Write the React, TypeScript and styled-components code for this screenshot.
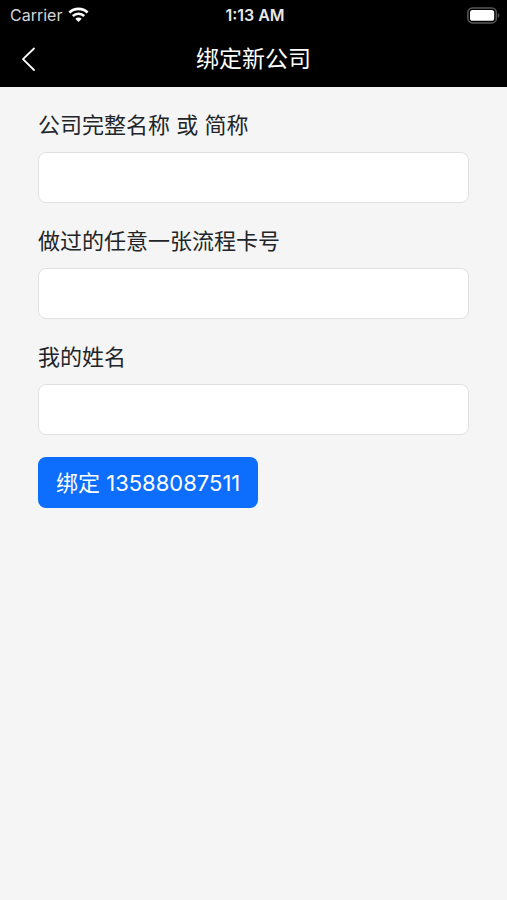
import React from "react";
import styled, { createGlobalStyle } from "styled-components";

const GlobalStyle = createGlobalStyle`
  *, *::before, *::after { box-sizing: border-box; }
  html { background: #f5f5f5; }
  body {
    margin: 0;
    color: #212529;
    font-family: Inter, "Noto Sans CJK SC", sans-serif;
    -webkit-font-smoothing: antialiased;
  }
`;

const Screen = styled.div`
  min-height: 100vh;
  background: #f5f5f5;
`;

const Header = styled.header`
  background: #000;
  color: #fff;
`;

const StatusBar = styled.div`
  display: grid;
  grid-template-columns: 1fr auto 1fr;
  align-items: center;
  height: 30px;
  padding: 0 7px 0 10px;
  font-size: 16px;
  line-height: 20px;
`;

const Carrier = styled.div`
  display: flex;
  align-items: center;
  gap: 6px;
  color: #d6d6d6;
`;

const Clock = styled.time`
  color: #e8e8e8;
  font-weight: 600;
`;

const Battery = styled.div`
  display: flex;
  justify-content: flex-end;
`;

const NavBar = styled.nav`
  display: grid;
  grid-template-columns: 56px 1fr 56px;
  align-items: center;
  height: 57px;
`;

const BackButton = styled.button`
  display: flex;
  align-items: center;
  justify-content: center;
  height: 56px;
  padding: 0;
  border: 0;
  background: none;
  color: #fff;
`;

const Title = styled.h1`
  margin: 0;
  text-align: center;
  font-size: 23px;
  font-weight: 400;
  line-height: 32px;
`;

const Form = styled.form`
  display: flex;
  flex-direction: column;
  align-items: flex-start;
  gap: 22px;
  padding: 22px 38px;
`;

const Field = styled.div`
  display: flex;
  flex-direction: column;
  gap: 11px;
  width: 100%;
`;

const Label = styled.label`
  font-size: 22px;
  line-height: 32px;
`;

const Input = styled.input`
  width: 100%;
  height: 51px;
  padding: 0 16px;
  border: 1px solid #dfe1e4;
  border-radius: 8px;
  background: #fff;
  color: inherit;
  font: inherit;
  font-size: 22px;
`;

const SubmitButton = styled.button`
  height: 51px;
  padding: 0 18px;
  border: 0;
  border-radius: 8px;
  background: #0d6efd;
  color: #fff;
  font: inherit;
  font-size: 22px;
  line-height: 32px;
`;

const fields = [
  { id: "company", label: "公司完整名称 或 简称" },
  { id: "card", label: "做过的任意一张流程卡号" },
  { id: "name", label: "我的姓名" },
];

function WifiIcon() {
  return (
    <svg width="21" height="16" viewBox="0 0 21 16" fill="none" stroke="#fff" aria-hidden="true">
      <path d="M1.4 5.5a13 13 0 0 1 18.2 0" strokeWidth="2.7" />
      <path d="M4.8 9a8.2 8.2 0 0 1 11.4 0" strokeWidth="2.5" />
      <path d="M10.5 15 7.3 11.8a4.6 4.6 0 0 1 6.4 0z" fill="#fff" stroke="none" />
    </svg>
  );
}

function BatteryIcon() {
  return (
    <svg width="33" height="17" viewBox="0 0 33 17" aria-hidden="true">
      <rect x="0.9" y="0.9" width="28.4" height="15" rx="4.5" fill="none" stroke="#58585a" strokeWidth="1.5" />
      <rect x="3" y="3" width="24.2" height="10.8" rx="2.6" fill="#fff" />
      <path d="M30.8 6v5c1-.4 1.5-1.300 1.500-2.500s-.5-2.100-1.500-2.500z" fill="#58585a" />
    </svg>
  );
}

function BackIcon() {
  return (
    <svg width="16" height="26" viewBox="0 0 16 26" fill="none" stroke="currentColor" strokeWidth="1.8" strokeLinecap="round" strokeLinejoin="round" aria-hidden="true">
      <path d="M14 2.500 3 13.200 14 24" />
    </svg>
  );
}

export default function App() {
  return (
    <Screen>
      <GlobalStyle />
      <Header>
        <StatusBar>
          <Carrier>
            Carrier
            <WifiIcon />
          </Carrier>
          <Clock>1:13 AM</Clock>
          <Battery>
            <BatteryIcon />
          </Battery>
        </StatusBar>
        <NavBar>
          <BackButton type="button" aria-label="返回">
            <BackIcon />
          </BackButton>
          <Title>绑定新公司</Title>
        </NavBar>
      </Header>
      <main>
        <Form onSubmit={(event: React.FormEvent) => event.preventDefault()}>
          {fields.map((field) => (
            <Field key={field.id}>
              <Label htmlFor={field.id}>{field.label}</Label>
              <Input id={field.id} name={field.id} type="text" />
            </Field>
          ))}
          <SubmitButton type="submit">绑定 13588087511</SubmitButton>
        </Form>
      </main>
    </Screen>
  );
}
